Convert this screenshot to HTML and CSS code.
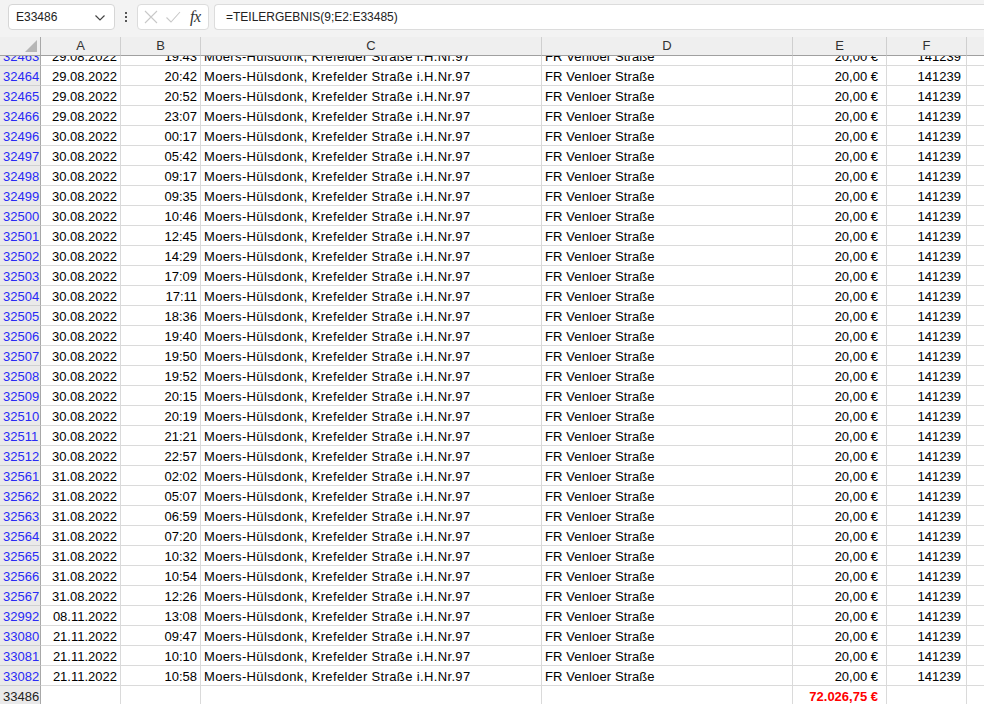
FILE: index.html
```html
<!DOCTYPE html>
<html lang="de">
<head>
<meta charset="utf-8">
<title>Excel</title>
<link rel="stylesheet" href="styles.css">
</head>
<body>
<div class="app">
  <div class="toolbar">
    <div class="namebox">
      <span class="name">E33486</span>
      <svg class="chev" width="12" height="8" viewBox="0 0 12 8"><path d="M1.5 1.5 L6 6 L10.5 1.5" fill="none" stroke="#444" stroke-width="1.2"/></svg>
    </div>
    <div class="dots"><span></span><span></span><span></span></div>
    <div class="fxbox">
      <svg width="16" height="16" viewBox="0 0 16 16"><path d="M2 2 L14 14 M14 2 L2 14" stroke="#c8c8c8" stroke-width="1.1" fill="none"/></svg>
      <svg width="16" height="16" viewBox="0 0 16 16"><path d="M1.5 8.5 L6 13 L15 3" stroke="#c8c8c8" stroke-width="1.1" fill="none"/></svg>
      <span class="fx">fx</span>
    </div>
    <div class="formula">=TEILERGEBNIS(9;E2:E33485)</div>
  </div>

  <div class="sheet">
    <div class="row head">
      <div class="c rh corner"><span class="tri"></span></div>
      <div class="c">A</div><div class="c">B</div><div class="c">C</div><div class="c">D</div><div class="c">E</div><div class="c">F</div><div class="c last"></div>
    </div>

    <div class="row partial"><div class="c rh"><span>32463</span></div><div class="c r"><span>29.08.2022</span></div><div class="c r"><span>19:43</span></div><div class="c t"><span>Moers-Hülsdonk, Krefelder Straße i.H.Nr.97</span></div><div class="c d"><span>FR Venloer Straße</span></div><div class="c r e"><span>20,00 €</span></div><div class="c r f"><span>141239</span></div><div class="c last"></div></div>

    <div class="row"><div class="c rh">32464</div><div class="c r">29.08.2022</div><div class="c r">20:42</div><div class="c t">Moers-Hülsdonk, Krefelder Straße i.H.Nr.97</div><div class="c d">FR Venloer Straße</div><div class="c r e">20,00 €</div><div class="c r f">141239</div><div class="c last"></div></div>
    <div class="row"><div class="c rh">32465</div><div class="c r">29.08.2022</div><div class="c r">20:52</div><div class="c t">Moers-Hülsdonk, Krefelder Straße i.H.Nr.97</div><div class="c d">FR Venloer Straße</div><div class="c r e">20,00 €</div><div class="c r f">141239</div><div class="c last"></div></div>
    <div class="row"><div class="c rh">32466</div><div class="c r">29.08.2022</div><div class="c r">23:07</div><div class="c t">Moers-Hülsdonk, Krefelder Straße i.H.Nr.97</div><div class="c d">FR Venloer Straße</div><div class="c r e">20,00 €</div><div class="c r f">141239</div><div class="c last"></div></div>
    <div class="row"><div class="c rh">32496</div><div class="c r">30.08.2022</div><div class="c r">00:17</div><div class="c t">Moers-Hülsdonk, Krefelder Straße i.H.Nr.97</div><div class="c d">FR Venloer Straße</div><div class="c r e">20,00 €</div><div class="c r f">141239</div><div class="c last"></div></div>
    <div class="row"><div class="c rh">32497</div><div class="c r">30.08.2022</div><div class="c r">05:42</div><div class="c t">Moers-Hülsdonk, Krefelder Straße i.H.Nr.97</div><div class="c d">FR Venloer Straße</div><div class="c r e">20,00 €</div><div class="c r f">141239</div><div class="c last"></div></div>
    <div class="row"><div class="c rh">32498</div><div class="c r">30.08.2022</div><div class="c r">09:17</div><div class="c t">Moers-Hülsdonk, Krefelder Straße i.H.Nr.97</div><div class="c d">FR Venloer Straße</div><div class="c r e">20,00 €</div><div class="c r f">141239</div><div class="c last"></div></div>
    <div class="row"><div class="c rh">32499</div><div class="c r">30.08.2022</div><div class="c r">09:35</div><div class="c t">Moers-Hülsdonk, Krefelder Straße i.H.Nr.97</div><div class="c d">FR Venloer Straße</div><div class="c r e">20,00 €</div><div class="c r f">141239</div><div class="c last"></div></div>
    <div class="row"><div class="c rh">32500</div><div class="c r">30.08.2022</div><div class="c r">10:46</div><div class="c t">Moers-Hülsdonk, Krefelder Straße i.H.Nr.97</div><div class="c d">FR Venloer Straße</div><div class="c r e">20,00 €</div><div class="c r f">141239</div><div class="c last"></div></div>
    <div class="row"><div class="c rh">32501</div><div class="c r">30.08.2022</div><div class="c r">12:45</div><div class="c t">Moers-Hülsdonk, Krefelder Straße i.H.Nr.97</div><div class="c d">FR Venloer Straße</div><div class="c r e">20,00 €</div><div class="c r f">141239</div><div class="c last"></div></div>
    <div class="row"><div class="c rh">32502</div><div class="c r">30.08.2022</div><div class="c r">14:29</div><div class="c t">Moers-Hülsdonk, Krefelder Straße i.H.Nr.97</div><div class="c d">FR Venloer Straße</div><div class="c r e">20,00 €</div><div class="c r f">141239</div><div class="c last"></div></div>
    <div class="row"><div class="c rh">32503</div><div class="c r">30.08.2022</div><div class="c r">17:09</div><div class="c t">Moers-Hülsdonk, Krefelder Straße i.H.Nr.97</div><div class="c d">FR Venloer Straße</div><div class="c r e">20,00 €</div><div class="c r f">141239</div><div class="c last"></div></div>
    <div class="row"><div class="c rh">32504</div><div class="c r">30.08.2022</div><div class="c r">17:11</div><div class="c t">Moers-Hülsdonk, Krefelder Straße i.H.Nr.97</div><div class="c d">FR Venloer Straße</div><div class="c r e">20,00 €</div><div class="c r f">141239</div><div class="c last"></div></div>
    <div class="row"><div class="c rh">32505</div><div class="c r">30.08.2022</div><div class="c r">18:36</div><div class="c t">Moers-Hülsdonk, Krefelder Straße i.H.Nr.97</div><div class="c d">FR Venloer Straße</div><div class="c r e">20,00 €</div><div class="c r f">141239</div><div class="c last"></div></div>
    <div class="row"><div class="c rh">32506</div><div class="c r">30.08.2022</div><div class="c r">19:40</div><div class="c t">Moers-Hülsdonk, Krefelder Straße i.H.Nr.97</div><div class="c d">FR Venloer Straße</div><div class="c r e">20,00 €</div><div class="c r f">141239</div><div class="c last"></div></div>
    <div class="row"><div class="c rh">32507</div><div class="c r">30.08.2022</div><div class="c r">19:50</div><div class="c t">Moers-Hülsdonk, Krefelder Straße i.H.Nr.97</div><div class="c d">FR Venloer Straße</div><div class="c r e">20,00 €</div><div class="c r f">141239</div><div class="c last"></div></div>
    <div class="row"><div class="c rh">32508</div><div class="c r">30.08.2022</div><div class="c r">19:52</div><div class="c t">Moers-Hülsdonk, Krefelder Straße i.H.Nr.97</div><div class="c d">FR Venloer Straße</div><div class="c r e">20,00 €</div><div class="c r f">141239</div><div class="c last"></div></div>
    <div class="row"><div class="c rh">32509</div><div class="c r">30.08.2022</div><div class="c r">20:15</div><div class="c t">Moers-Hülsdonk, Krefelder Straße i.H.Nr.97</div><div class="c d">FR Venloer Straße</div><div class="c r e">20,00 €</div><div class="c r f">141239</div><div class="c last"></div></div>
    <div class="row"><div class="c rh">32510</div><div class="c r">30.08.2022</div><div class="c r">20:19</div><div class="c t">Moers-Hülsdonk, Krefelder Straße i.H.Nr.97</div><div class="c d">FR Venloer Straße</div><div class="c r e">20,00 €</div><div class="c r f">141239</div><div class="c last"></div></div>
    <div class="row"><div class="c rh">32511</div><div class="c r">30.08.2022</div><div class="c r">21:21</div><div class="c t">Moers-Hülsdonk, Krefelder Straße i.H.Nr.97</div><div class="c d">FR Venloer Straße</div><div class="c r e">20,00 €</div><div class="c r f">141239</div><div class="c last"></div></div>
    <div class="row"><div class="c rh">32512</div><div class="c r">30.08.2022</div><div class="c r">22:57</div><div class="c t">Moers-Hülsdonk, Krefelder Straße i.H.Nr.97</div><div class="c d">FR Venloer Straße</div><div class="c r e">20,00 €</div><div class="c r f">141239</div><div class="c last"></div></div>
    <div class="row"><div class="c rh">32561</div><div class="c r">31.08.2022</div><div class="c r">02:02</div><div class="c t">Moers-Hülsdonk, Krefelder Straße i.H.Nr.97</div><div class="c d">FR Venloer Straße</div><div class="c r e">20,00 €</div><div class="c r f">141239</div><div class="c last"></div></div>
    <div class="row"><div class="c rh">32562</div><div class="c r">31.08.2022</div><div class="c r">05:07</div><div class="c t">Moers-Hülsdonk, Krefelder Straße i.H.Nr.97</div><div class="c d">FR Venloer Straße</div><div class="c r e">20,00 €</div><div class="c r f">141239</div><div class="c last"></div></div>
    <div class="row"><div class="c rh">32563</div><div class="c r">31.08.2022</div><div class="c r">06:59</div><div class="c t">Moers-Hülsdonk, Krefelder Straße i.H.Nr.97</div><div class="c d">FR Venloer Straße</div><div class="c r e">20,00 €</div><div class="c r f">141239</div><div class="c last"></div></div>
    <div class="row"><div class="c rh">32564</div><div class="c r">31.08.2022</div><div class="c r">07:20</div><div class="c t">Moers-Hülsdonk, Krefelder Straße i.H.Nr.97</div><div class="c d">FR Venloer Straße</div><div class="c r e">20,00 €</div><div class="c r f">141239</div><div class="c last"></div></div>
    <div class="row"><div class="c rh">32565</div><div class="c r">31.08.2022</div><div class="c r">10:32</div><div class="c t">Moers-Hülsdonk, Krefelder Straße i.H.Nr.97</div><div class="c d">FR Venloer Straße</div><div class="c r e">20,00 €</div><div class="c r f">141239</div><div class="c last"></div></div>
    <div class="row"><div class="c rh">32566</div><div class="c r">31.08.2022</div><div class="c r">10:54</div><div class="c t">Moers-Hülsdonk, Krefelder Straße i.H.Nr.97</div><div class="c d">FR Venloer Straße</div><div class="c r e">20,00 €</div><div class="c r f">141239</div><div class="c last"></div></div>
    <div class="row"><div class="c rh">32567</div><div class="c r">31.08.2022</div><div class="c r">12:26</div><div class="c t">Moers-Hülsdonk, Krefelder Straße i.H.Nr.97</div><div class="c d">FR Venloer Straße</div><div class="c r e">20,00 €</div><div class="c r f">141239</div><div class="c last"></div></div>
    <div class="row"><div class="c rh">32992</div><div class="c r">08.11.2022</div><div class="c r">13:08</div><div class="c t">Moers-Hülsdonk, Krefelder Straße i.H.Nr.97</div><div class="c d">FR Venloer Straße</div><div class="c r e">20,00 €</div><div class="c r f">141239</div><div class="c last"></div></div>
    <div class="row"><div class="c rh">33080</div><div class="c r">21.11.2022</div><div class="c r">09:47</div><div class="c t">Moers-Hülsdonk, Krefelder Straße i.H.Nr.97</div><div class="c d">FR Venloer Straße</div><div class="c r e">20,00 €</div><div class="c r f">141239</div><div class="c last"></div></div>
    <div class="row"><div class="c rh">33081</div><div class="c r">21.11.2022</div><div class="c r">10:10</div><div class="c t">Moers-Hülsdonk, Krefelder Straße i.H.Nr.97</div><div class="c d">FR Venloer Straße</div><div class="c r e">20,00 €</div><div class="c r f">141239</div><div class="c last"></div></div>
    <div class="row"><div class="c rh">33082</div><div class="c r">21.11.2022</div><div class="c r">10:58</div><div class="c t">Moers-Hülsdonk, Krefelder Straße i.H.Nr.97</div><div class="c d">FR Venloer Straße</div><div class="c r e">20,00 €</div><div class="c r f">141239</div><div class="c last"></div></div>
    <div class="row"><div class="c rh plain">33486</div><div class="c r"></div><div class="c r"></div><div class="c"></div><div class="c"></div><div class="c r e total">72.026,75 €</div><div class="c r f"></div><div class="c last"></div></div>
  </div>
</div>
</body>
</html>
```

FILE: styles.css
```css
* { box-sizing: border-box; }
html, body { margin: 0; padding: 0; }
body {
  width: 984px;
  height: 704px;
  overflow: hidden;
  background: #ffffff;
  font-family: "Liberation Sans", Arial, sans-serif;
  color: #000;
}
.app { display: flex; flex-direction: column; height: 704px; }

.toolbar {
  height: 37px;
  flex: none;
  background: #f3f3f3;
  display: flex;
  align-items: flex-start;
  padding-top: 4px;
  padding-left: 8px;
}
.namebox {
  width: 107px;
  height: 26px;
  background: #fff;
  border: 1px solid #d6d6d6;
  border-radius: 4px;
  display: flex;
  align-items: center;
  justify-content: space-between;
  padding: 0 8px 0 7px;
  font-size: 12px;
  color: #222;
}
.chev { margin-top: 1px; }
.dots {
  width: 22px;
  height: 26px;
  display: flex;
  flex-direction: column;
  align-items: center;
  justify-content: center;
  gap: 2px;
}
.dots span { width: 2px; height: 2px; background: #555; display: block; }
.fxbox {
  width: 72px;
  height: 26px;
  background: #fff;
  border: 1px solid #dcdcdc;
  border-radius: 4px;
  display: flex;
  align-items: center;
  padding: 0 4px 0 5px;
  gap: 6px;
}
.fx {
  font-family: "Liberation Serif", "DejaVu Serif", serif;
  font-style: italic;
  font-size: 16px;
  color: #333;
  margin-left: 3px;
  letter-spacing: -0.5px;
}
.formula {
  flex: 1;
  margin-left: 5px;
  height: 26px;
  background: #fff;
  border: 1px solid #dcdcdc;
  border-right: none;
  border-radius: 4px 0 0 4px;
  display: flex;
  align-items: center;
  padding-left: 11px;
  font-size: 12px;
  color: #222;
}

.sheet { flex: 1; overflow: hidden; background: #fff; }
.row {
  display: grid;
  grid-template-columns: 41px 80px 80px 341px 251px 94px 80px 1fr;
  height: 20px;
  font-size: 13px;
}
.c {
  border-right: 1px solid #dadada;
  border-bottom: 1px solid #dadada;
  padding: 1px 3px 0;
  line-height: 19px;
  white-space: nowrap;
  overflow: hidden;
}
.c.t { letter-spacing: 0.36px; }
.c.d { letter-spacing: 0.12px; }
.c.r { text-align: right; }
.c.e { padding-right: 8px; }
.c.f { padding-right: 5px; }
.c.last { border-right: none; }

.rh {
  background: #eaeaea;
  border-right: 1px solid #a8a8a8;
  border-bottom: 1px solid #d0d0d0;
  color: #2929f5;
  text-align: left;
  padding: 1px 2px 0 3px;
}
.rh.plain { color: #222; }

.row.head { height: 19px; font-size: 13px; }
.head .c {
  background: #efefef;
  border-bottom: 1px solid #a0a0a0;
  border-right: 1px solid #cfcfcf;
  text-align: center;
  color: #333;
  line-height: 18px;
  padding-top: 0;
}
.head .c.last { border-right: none; }
.head .corner {
  border-right: 1px solid #a8a8a8;
  display: flex;
  align-items: flex-end;
  justify-content: flex-end;
  padding: 0 3px 3px 0;
}
.tri {
  width: 0; height: 0;
  border-left: 12px solid transparent;
  border-bottom: 12px solid #b6b6b6;
}

.row.partial { height: 10px; }
.partial .c { line-height: 9px; padding-top: 0; }
.partial .c span { display: inline-block; margin-top: -9px; line-height: 19px; vertical-align: top; }

.total { color: #ff0000; font-weight: bold; }
```
